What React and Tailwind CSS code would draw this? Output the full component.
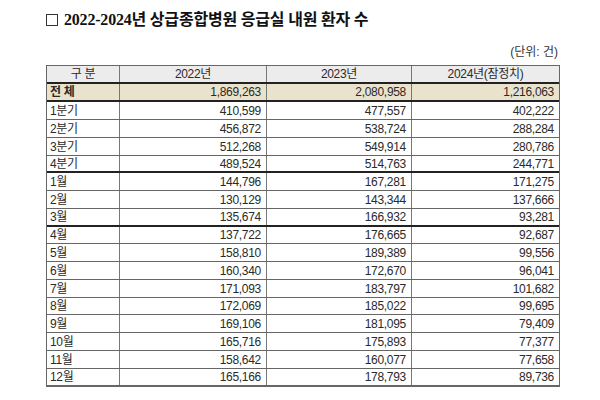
const rows = [
  ["1분기", "410,599", "477,557", "402,222", false],
  ["2분기", "456,872", "538,724", "288,284", false],
  ["3분기", "512,268", "549,914", "280,786", false],
  ["4분기", "489,524", "514,763", "244,771", true],
  ["1월", "144,796", "167,281", "171,275", false],
  ["2월", "130,129", "143,344", "137,666", false],
  ["3월", "135,674", "166,932", "93,281", true],
  ["4월", "137,722", "176,665", "92,687", false],
  ["5월", "158,810", "189,389", "99,556", false],
  ["6월", "160,340", "172,670", "96,041", false],
  ["7월", "171,093", "183,797", "101,682", false],
  ["8월", "172,069", "185,022", "99,695", false],
  ["9월", "169,106", "181,095", "79,409", false],
  ["10월", "165,716", "175,893", "77,377", false],
  ["11월", "158,642", "160,077", "77,658", false],
  ["12월", "165,166", "178,793", "89,736", false],
];

function Row({ r, i }) {
  const line = r[4] ? "border-b-2 border-[#222]" : "border-b border-[#666]";
  const h = i % 4 === 3 || i === 15 ? "h-[17px]" : "h-[18px]";
  return (
    <div className={"grid grid-cols-[73px_147px_145px_147px] " + h + " " + line}>
      <div className="border-r border-[#777] px-[3px] flex items-center">{r[0]}</div>
      <div className="border-r border-[#777] px-[5px] flex items-center justify-end">{r[1]}</div>
      <div className="border-r border-[#777] px-[5px] flex items-center justify-end">{r[2]}</div>
      <div className="px-[5px] flex items-center justify-end">{r[3]}</div>
    </div>
  );
}

export default function App() {
  return (
    <main className="w-[600px] h-[400px] bg-white overflow-hidden font-['Liberation_Sans','Noto_Sans_CJK_KR',sans-serif] text-[#2a2a2a]">
      <h1 className="pl-[46px] pt-[9px] flex items-center gap-[6px] font-['Liberation_Serif','Noto_Sans_CJK_KR',serif] font-bold text-[16px] leading-[22px] tracking-[-0.2px] text-[#111]">
        <span className="w-[12px] h-[12px] border border-[#333] inline-block"></span>
        <span>2022-2024년 상급종합병원 응급실 내원 환자 수</span>
      </h1>

      <p className="mt-[14px] pr-[42px] text-right text-[12px] leading-[14px] text-[#333]">
        (단위: 건)
      </p>

      <div className="ml-[46px] mt-[6px] w-[514px] border border-[#666] text-[12px] leading-[14px] tracking-[-0.3px]">
        <div className="grid grid-cols-[73px_147px_145px_147px] h-[18px] bg-[#ececec] border-b-2 border-[#222]">
          <div className="border-r border-[#777] flex items-center justify-center">구 분</div>
          <div className="border-r border-[#777] flex items-center justify-center">2022년</div>
          <div className="border-r border-[#777] flex items-center justify-center">2023년</div>
          <div className="flex items-center justify-center">2024년(잠정치)</div>
        </div>
        <div className="grid grid-cols-[73px_147px_145px_147px] h-[18px] bg-[#e9e2cc] border-b-2 border-[#222]">
          <div className="border-r border-[#777] px-[3px] flex items-center font-bold">전 체</div>
          <div className="border-r border-[#777] px-[5px] flex items-center justify-end">1,869,263</div>
          <div className="border-r border-[#777] px-[5px] flex items-center justify-end">2,080,958</div>
          <div className="px-[5px] flex items-center justify-end">1,216,063</div>
        </div>
        {rows.map((r, i) => (
          <Row key={r[0]} r={r} i={i} />
        ))}
      </div>
    </main>
  );
}
